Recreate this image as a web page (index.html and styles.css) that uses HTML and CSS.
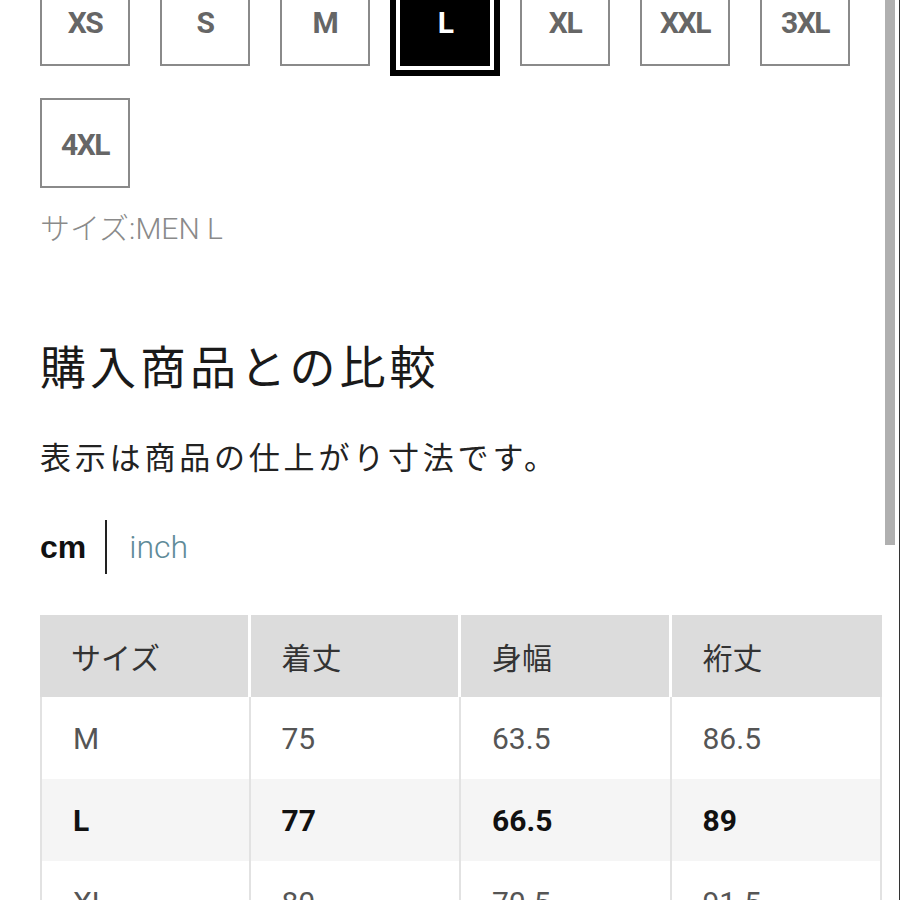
FILE: index.html
```html
<!DOCTYPE html>
<html lang="ja">
<head>
<meta charset="utf-8">
<title>サイズ</title>
<link rel="stylesheet" href="styles.css">
</head>
<body>
<div class="page">
  <div class="sizes">
    <div class="size">XS</div>
    <div class="size">S</div>
    <div class="size">M</div>
    <div class="size selected">L</div>
    <div class="size">XL</div>
    <div class="size">XXL</div>
    <div class="size">3XL</div>
    <div class="size">4XL</div>
  </div>
  <div class="size-label">サイズ:MEN L</div>
  <h2 class="title">購入商品との比較</h2>
  <p class="note">表示は商品の仕上がり寸法です。</p>
  <div class="units">
    <span class="unit-active">cm</span>
    <span class="unit-sep"></span>
    <span class="unit-link">inch</span>
  </div>
  <table class="chart">
    <thead>
      <tr><th>サイズ</th><th>着丈</th><th>身幅</th><th>裄丈</th></tr>
    </thead>
    <tbody>
      <tr><td>M</td><td>75</td><td>63.5</td><td>86.5</td></tr>
      <tr class="current"><td>L</td><td>77</td><td>66.5</td><td>89</td></tr>
      <tr><td>XL</td><td>80</td><td>70.5</td><td>91.5</td></tr>
    </tbody>
  </table>
</div>
<div class="scrollbar"></div>
<div class="edge"></div>
</body>
</html>
```
FILE: styles.css
```css
html, body {
  margin: 0;
  padding: 0;
  background: #fff;
  overflow: hidden;
}
body {
  font-family: "Roboto", "Noto Sans CJK JP", sans-serif;
  color: #1a1a1a;
}
.page {
  padding-left: 40px;
  margin-top: -24px;
}
.sizes {
  display: flex;
  flex-wrap: wrap;
  gap: 32px 30px;
  width: 842px;
}
.size {
  box-sizing: border-box;
  width: 90px;
  height: 90px;
  border: 2px solid #8a8a8a;
  display: flex;
  align-items: center;
  justify-content: center;
  font-family: "Roboto", sans-serif;
  font-weight: 700;
  font-size: 30px;
  letter-spacing: -1.5px;
  color: #666;
  padding-top: 2px;
}
.size.selected {
  background: #000;
  border-color: #000;
  color: #fff;
  box-shadow: 0 0 0 4px #fff, 0 0 0 10px #000;
}
.size-label {
  margin-top: 20px;
  font-size: 30px;
  line-height: 42px;
  font-weight: 300;
  color: #8a8a8a;
}
.title {
  margin: 84px 0 0;
  font-size: 46px;
  line-height: 60px;
  font-weight: 400;
  letter-spacing: 4px;
  color: #1a1a1a;
  font-family: "Noto Sans CJK JP", sans-serif;
}
.note {
  margin: 40px 0 0;
  font-size: 31px;
  line-height: 44px;
  letter-spacing: 3.8px;
  color: #222;
  font-family: "Noto Sans CJK JP", sans-serif;
}
.units {
  margin-top: 42px;
  height: 54px;
  display: flex;
  align-items: center;
}
.unit-active {
  font-family: "Liberation Sans", sans-serif;
  font-weight: 700;
  font-size: 32px;
  color: #111;
}
.unit-sep {
  width: 2px;
  height: 54px;
  background: #222;
  margin: 0 22px 0 19px;
}
.unit-link {
  font-weight: 300;
  font-size: 32px;
  color: #5f8b99;
}
.chart {
  margin-top: 41px;
  width: 842px;
  border-collapse: separate;
  border-spacing: 0;
  table-layout: fixed;
}
.chart th,
.chart td {
  text-align: left;
  padding: 0 0 0 31px;
  font-size: 30px;
}
.chart th {
  height: 82px;
  background: #dcdcdc;
  font-weight: 400;
  color: #333;
  font-family: "Noto Sans CJK JP", sans-serif;
  border-right: 3px solid #fff;
}
.chart th:last-child {
  border-right: 0;
}
.chart td {
  height: 82px;
  color: #555;
  font-weight: 400;
  border-right: 2px solid #e2e2e2;
}
.chart td:first-child {
  border-left: 2px solid #e2e2e2;
}
.chart tr.current td {
  background: #f5f5f5;
  font-weight: 700;
  color: #111;
}
.scrollbar {
  position: fixed;
  top: 0;
  right: 5px;
  width: 10px;
  height: 545px;
  background: #b0b0b0;
}
.edge {
  position: fixed;
  top: 0;
  right: 0;
  width: 1px;
  height: 900px;
  background: #333;
}
```
